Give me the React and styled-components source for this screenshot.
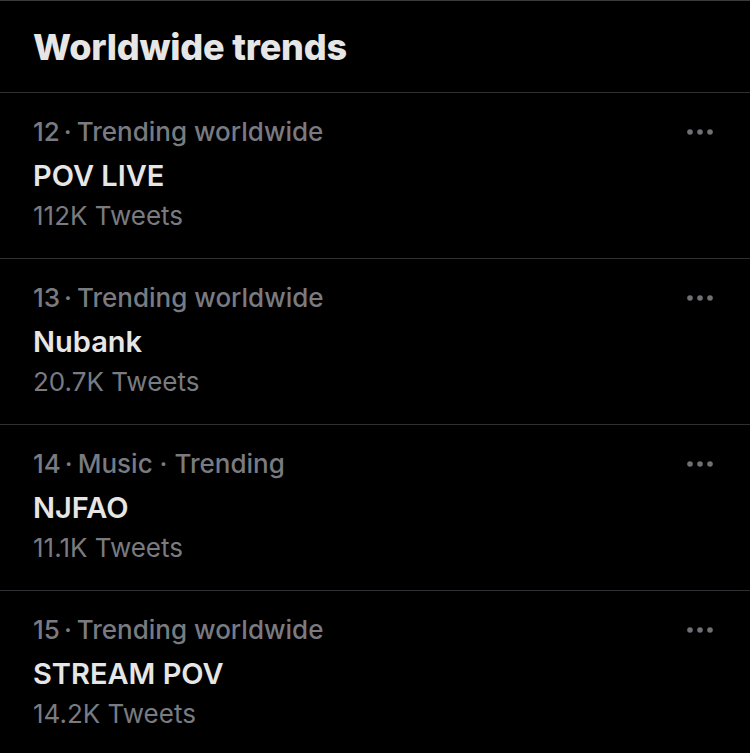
import React from 'react';
import styled, { createGlobalStyle } from 'styled-components';

const trends = [
	{ rank: 12, context: 'Trending worldwide', name: 'POV LIVE', count: '112K Tweets' },
	{ rank: 13, context: 'Trending worldwide', name: 'Nubank', count: '20.7K Tweets' },
	{ rank: 14, context: 'Music · Trending', name: 'NJFAO', count: '11.1K Tweets' },
	{ rank: 15, context: 'Trending worldwide', name: 'STREAM POV', count: '14.2K Tweets' }
];

export default function App() {
	return (
		<>
			<GlobalStyle />
			<Panel>
				<Header>
					<Title>Worldwide trends</Title>
				</Header>
				{trends.map((t) => (
					<TrendRow key={t.rank}>
						<TrendText>
							<Meta>
								{t.rank}
								<Dot>·</Dot>
								{t.context}
							</Meta>
							<TrendName>{t.name}</TrendName>
							<Count>{t.count}</Count>
						</TrendText>
						<MoreButton aria-label="more">
							<svg width="28" height="8" viewBox="0 0 28 8">
								<circle cx="4" cy="4" r="2.8" fill="currentColor" />
								<circle cx="14" cy="4" r="2.8" fill="currentColor" />
								<circle cx="24" cy="4" r="2.8" fill="currentColor" />
							</svg>
						</MoreButton>
					</TrendRow>
				))}
			</Panel>
		</>
	);
}

const GlobalStyle = createGlobalStyle`
	html, body {
		margin: 0;
		background: #000;
	}
	body {
		font-family: Inter, "Liberation Sans", sans-serif;
		-webkit-font-smoothing: antialiased;
	}
`;

const Panel = styled.div`
	width: 750px;
	height: 753px;
	overflow: hidden;
	background: #000;
	border-top: 1px solid #3a3a3c;
	box-sizing: border-box;
`;

const Header = styled.div`
	height: 91px;
	display: flex;
	align-items: center;
	padding: 0 33px;
	border-bottom: 1px solid #2f3033;
`;

const Title = styled.h2`
	margin: 0;
	font-size: 36px;
	font-weight: 800;
	letter-spacing: -0.2px;
	color: #e6e6e6;
`;

const TrendRow = styled.div`
	display: flex;
	justify-content: space-between;
	align-items: flex-start;
	padding: 19px 36px 26px 33px;
	border-bottom: 1px solid #2f3033;
`;

const TrendText = styled.div`
	display: flex;
	flex-direction: column;
`;

const Meta = styled.div`
	font-size: 26px;
	line-height: 40px;
	font-weight: 500;
	color: #797b80;
`;

const Dot = styled.span`
	margin: 0 5px 0 4px;
`;

const TrendName = styled.div`
	font-size: 29px;
	line-height: 48px;
	font-weight: 600;
	color: #e6e6e6;
`;

const Count = styled.div`
	font-size: 26px;
	line-height: 32px;
	color: #797b80;
`;

const MoreButton = styled.div`
	display: flex;
	align-items: center;
	margin-top: 16px;
	color: #6e7074;
`;
